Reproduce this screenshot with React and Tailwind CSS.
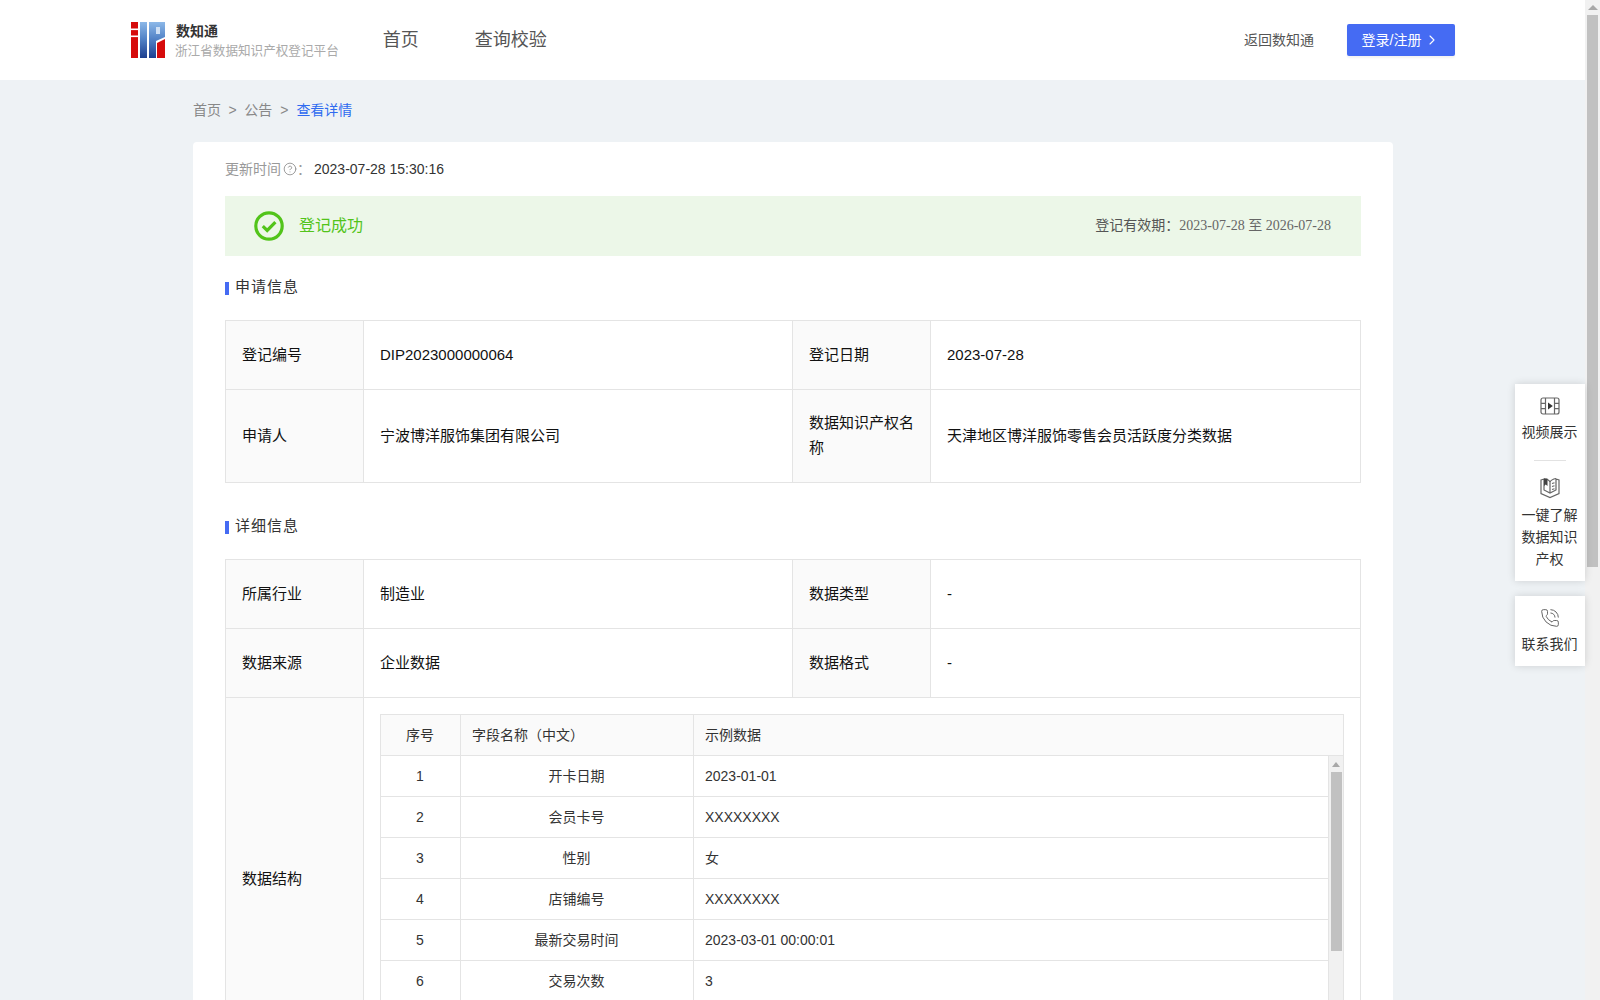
import { ChevronRight, CircleHelp, PhoneCall } from "lucide-react";

const font = { fontFamily: '"Liberation Sans", "Noto Sans CJK SC", sans-serif' };

function Logo() {
  return (
    <svg width="34" height="36" viewBox="0 0 34 36" className="shrink-0">
      <defs>
        <linearGradient id="blueBar" x1="0" y1="0" x2="0" y2="1">
          <stop offset="0" stopColor="#8cb8e8" />
          <stop offset="0.5" stopColor="#4f7fc4" />
          <stop offset="1" stopColor="#1d3f8f" />
        </linearGradient>
      </defs>
      <rect x="0" y="0" width="7" height="36" fill="#d60b0b" />
      <rect x="0" y="6.5" width="7" height="1.6" fill="#fff" />
      <rect x="0" y="13.5" width="7" height="1.6" fill="#fff" />
      <rect x="9" y="0" width="7" height="36" fill="url(#blueBar)" />
      <path d="M18 0H34V15L25 19V36H18Z" fill="url(#blueBar)" />
      <rect x="25" y="5" width="4" height="7" fill="#cfe0f5" />
      <path d="M26 36V21L34 17V36Z" fill="#d60b0b" />
    </svg>
  );
}

function SectionTitle({ children, className }) {
  return (
    <div className={`flex items-center h-5 ${className}`}>
      <span className="w-1 h-[13px] bg-[#456bf3] mt-[3px]" />
      <span className="ml-[6px] text-[15px] tracking-[1px] text-[#333]">{children}</span>
    </div>
  );
}

const label = "border border-[#e4e4e4] bg-[#fafafa] px-4 pb-[2px] text-[15px] leading-[25px] text-[#111] font-normal text-left";
const value = "border border-[#e4e4e4] px-4 pb-[2px] text-[15px] leading-[25px] text-[#111]";

function Colgroup() {
  return (
    <colgroup>
      <col className="w-[138px]" />
      <col className="w-[429px]" />
      <col className="w-[138px]" />
      <col className="w-[430px]" />
    </colgroup>
  );
}

const fields = [
  ["1", "开卡日期", "2023-01-01"],
  ["2", "会员卡号", "XXXXXXXX"],
  ["3", "性别", "女"],
  ["4", "店铺编号", "XXXXXXXX"],
  ["5", "最新交易时间", "2023-03-01 00:00:01"],
  ["6", "交易次数", "3"],
];

function FieldTable() {
  return (
    <div className="border-t border-l border-r border-[#e4e4e4] text-sm text-[#333]">
      <div className="grid grid-cols-[80px_233px_1fr] h-[41px] bg-[#fafafa] border-b border-[#e4e4e4] items-stretch">
        <div className="flex items-center justify-center pb-[1px] pr-[1px] border-r border-[#e4e4e4]">序号</div>
        <div className="flex items-center pl-[11px] pb-[1px] border-r border-[#e4e4e4]">字段名称（中文）</div>
        <div className="flex items-center pl-[11px] pb-[1px]">示例数据</div>
      </div>
      <div className="flex h-[288px] overflow-hidden">
        <div className="flex-1">
          {fields.map((row) => (
            <div key={row[0]} className="grid grid-cols-[80px_233px_1fr] h-[41px] border-b border-[#e4e4e4]">
              <div className="flex items-center justify-center pr-[1px] border-r border-[#e4e4e4]">{row[0]}</div>
              <div className="flex items-center justify-center pr-[1px] border-r border-[#e4e4e4]">{row[1]}</div>
              <div className="flex items-center pl-[11px]">{row[2]}</div>
            </div>
          ))}
        </div>
        <div className="w-[15px] bg-[#f1f1f1] border-l border-[#e4e4e4] relative">
          <div className="mx-auto mt-[6px] w-0 h-0 border-l-4 border-r-4 border-b-[5px] border-l-transparent border-r-transparent border-b-[#a8a8a8]" />
          <div className="absolute left-[2px] top-[16px] w-[11px] h-[179px] bg-[#c1c1c1]" />
        </div>
      </div>
    </div>
  );
}

function FilmIcon() {
  return (
    <svg width="20" height="20" viewBox="0 0 20 20" fill="none" stroke="#666" strokeWidth="1.2">
      <rect x="1" y="2" width="18" height="16" rx="2" />
      <path d="M5.5 2V18M14.5 2V18M1 7.3H5.5M1 12.7H5.5M14.5 7.3H19M14.5 12.7H19" />
      <path d="M8 6.5L12.8 10L8 13.5Z" fill="#333" stroke="none" />
    </svg>
  );
}

function BookIcon() {
  return (
    <svg width="20" height="22" viewBox="0 0 20 22" fill="none" stroke="#666" strokeWidth="1.2">
      <path d="M1 3L4 2V13L10 16L16 13V2L19 3V16.5L10 20.5L1 16.5Z" />
      <path d="M4 2C6.5 2 9 3 10 5V16M16 1.5C13.5 2 11 3 10 5" />
      <path d="M4 1.5H7.5V9L5.7 7.5L4 9Z" fill="#444" stroke="none" />
      <path d="M12 6.5L14.5 5.7M12 9.5L14.5 8.7M12 12.5L14.5 11.7" />
    </svg>
  );
}

function SideWidget() {
  return (
    <div className="absolute right-[15px] top-[384px] w-[70px] text-sm leading-[22px] text-[#333] text-center">
      <div className="bg-white shadow-[0_0_8px_rgba(0,0,0,0.14)] pt-3 pb-[11px] pr-[1px] flex flex-col items-center">
        <FilmIcon />
        <div className="mt-[5px]">视频展示</div>
        <div className="w-8 border-t border-[#e2e2e2] mt-[17px]" />
        <div className="mt-[16px] -mr-[1px]"><BookIcon /></div>
        <div className="mt-[5px] w-[56px]">一键了解数据知识产权</div>
      </div>
      <div className="bg-white shadow-[0_0_8px_rgba(0,0,0,0.14)] mt-[15px] h-[70px] pt-3 pr-[1px] flex flex-col items-center">
        <PhoneCall size={20} strokeWidth={1.2} color="#666" className="ml-[1px]" />
        <div className="mt-[5px]">联系我们</div>
      </div>
    </div>
  );
}

export default function App() {
  return (
    <div className="relative flex h-screen overflow-hidden bg-[#eef2f5]" style={font}>
      <div className="flex-1 min-w-0">
        {/* ------------------- HEADER -------------------*/}
        <header className="h-20 bg-white flex items-center pl-[131px] pr-[130px]">
          <Logo />
          <div className="ml-[11px]">
            <div className="text-sm font-bold text-[#333] leading-5">数知通</div>
            <div className="text-[12.6px] -ml-[1px] text-[#aaa] leading-[18px] mt-[1px]">浙江省数据知识产权登记平台</div>
          </div>
          <nav className="ml-[44px] flex gap-[56px] text-lg text-[#555]">
            <span>首页</span>
            <span>查询校验</span>
          </nav>
          <span className="ml-auto text-sm text-[#555]">返回数知通</span>
          <button className="ml-[33px] w-[108px] h-8 bg-[#456bf3] rounded-[2px] text-white text-sm pb-[1px] flex items-center justify-center gap-[3px] shadow-[0_2px_2px_rgba(0,0,0,0.05)]">
            登录/注册
            <ChevronRight size={16} strokeWidth={1.6} />
          </button>
        </header>

        <div className="ml-[193px] w-[1200px]">
          {/* ------------------- BREADCRUMB -------------------*/}
          <div className="h-[62px] pb-[2px] flex items-center text-sm text-[#888]">
            <span>首页</span>
            <span className="mx-[7.5px]">&gt;</span>
            <span>公告</span>
            <span className="mx-2">&gt;</span>
            <span className="text-[#2f6bf0]">查看详情</span>
          </div>

          {/* ------------------- CARD -------------------*/}
          <section className="bg-white rounded px-8 pt-[17px]">
            <div className="flex items-center h-5 text-sm">
              <span className="text-[#999]">更新时间</span>
              <CircleHelp size={14} strokeWidth={1.4} color="#888" className="ml-[2px]" />
              <span className="text-[#999] w-[16px]">：</span>
              <span className="text-[#333] ml-[1px]">2023-07-28 15:30:16</span>
            </div>

            <div className="mt-[17px] h-[60px] bg-[#ecf7e8] flex items-center pl-[29px] pr-[30px]">
              <svg width="30" height="30" viewBox="0 0 30 30" fill="none">
                <circle cx="15" cy="15" r="13.2" stroke="#52c41a" strokeWidth="3.2" />
                <path d="M8.8 15.2L13.2 19.4L21.4 11.2" stroke="#52c41a" strokeWidth="3.2" />
              </svg>
              <span className="ml-[15px] text-base text-[#52c41a]">登记成功</span>
              <span className="ml-auto text-sm text-[#555] pb-[2px]">
                登记有效期：
                <span className="text-[#666]" style={{ fontFamily: '"Liberation Serif", "Noto Sans CJK SC", serif' }}>
                  2023-07-28 至 2026-07-28
                </span>
              </span>
            </div>

            <SectionTitle className="mt-[21px] mb-[23px]">申请信息</SectionTitle>
            <table className="w-[1135px] table-fixed border-collapse">
              <Colgroup />
              <tbody>
                <tr className="h-[69px]">
                  <th className={label}>登记编号</th>
                  <td className={value}>DIP2023000000064</td>
                  <th className={label}>登记日期</th>
                  <td className={value}>2023-07-28</td>
                </tr>
                <tr className="h-[93px]">
                  <th className={label}>申请人</th>
                  <td className={value}>宁波博洋服饰集团有限公司</td>
                  <th className={label}>数据知识产权名称</th>
                  <td className={value}>天津地区博洋服饰零售会员活跃度分类数据</td>
                </tr>
              </tbody>
            </table>

            <SectionTitle className="mt-[33px] mb-[23px]">详细信息</SectionTitle>
            <table className="w-[1135px] table-fixed border-collapse">
              <Colgroup />
              <tbody>
                <tr className="h-[69px]">
                  <th className={label}>所属行业</th>
                  <td className={value}>制造业</td>
                  <th className={label}>数据类型</th>
                  <td className={value}>-</td>
                </tr>
                <tr className="h-[69px]">
                  <th className={label}>数据来源</th>
                  <td className={value}>企业数据</td>
                  <th className={label}>数据格式</th>
                  <td className={value}>-</td>
                </tr>
                <tr>
                  <th className={label}>数据结构</th>
                  <td className="border border-[#e4e4e4] p-4" colSpan={3}>
                    <FieldTable />
                  </td>
                </tr>
              </tbody>
            </table>
          </section>
        </div>
      </div>

      {/* page scrollbar */}
      <div className="w-[15px] bg-[#f1f1f1] shrink-0 flex flex-col items-center">
        <div className="mt-[5px] w-0 h-0 border-l-[5px] border-r-[5px] border-b-[5px] border-l-transparent border-r-transparent border-b-[#a8a8a8]" />
        <div className="mt-[5px] w-[11px] h-[552px] bg-[#c1c1c1]" />
      </div>

      <SideWidget />
    </div>
  );
}
